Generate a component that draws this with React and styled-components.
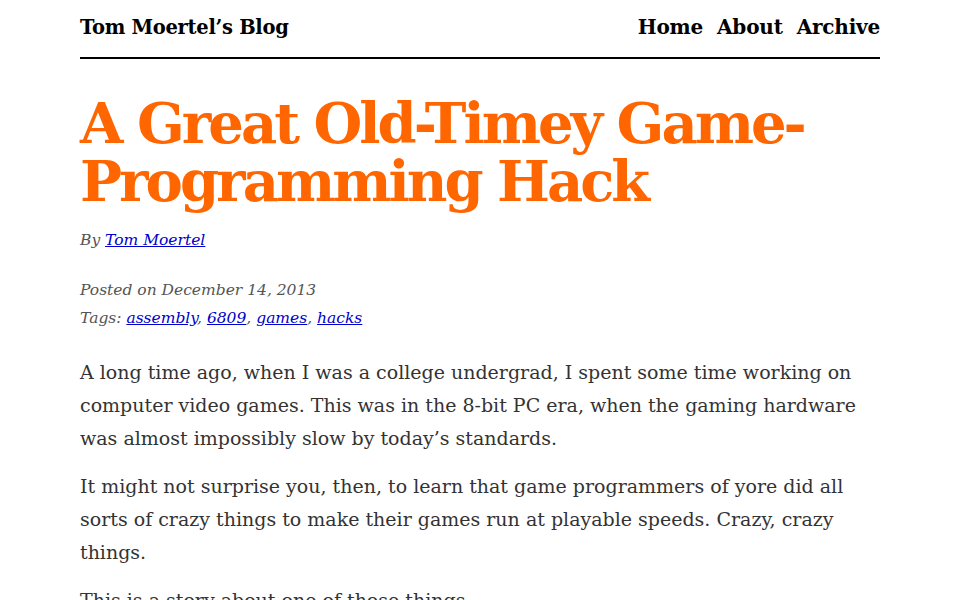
import React from "react";
import styled, { createGlobalStyle } from "styled-components";

const Global = createGlobalStyle`
  html, body { margin: 0; padding: 0; background: #fff; }
  body { font-family: "DejaVu Serif", serif; color: #333; }
`;

const Page = styled.div`
  width: 800px;
  margin: 0 auto;
`;

const Header = styled.header`
  display: flex;
  justify-content: space-between;
  align-items: baseline;
  padding-top: 15px;
  padding-bottom: 18px;
  border-bottom: 2px solid #000;
`;

const SiteName = styled.a`
  font-family: "DejaVu Serif", serif;
  font-weight: bold;
  font-size: 19.5px;
  color: #000;
  text-decoration: none;
  letter-spacing: -0.3px;
`;

const Nav = styled.nav`
  display: flex;
  gap: 14px;
`;

const NavLink = styled.a`
  font-family: "DejaVu Serif", serif;
  font-weight: bold;
  font-size: 20px;
  color: #000;
  text-decoration: none;
  letter-spacing: -0.2px;
`;

const Title = styled.h1`
  margin: 35px 0 16px;
  font-family: "DejaVu Serif", serif;
  font-weight: bold;
  font-size: 56px;
  line-height: 58px;
  color: #ff6600;
  letter-spacing: -3px;
`;

const Meta = styled.div`
  font-style: italic;
  font-size: 15.5px;
  line-height: 28px;
  color: #555;
  margin-bottom: ${(p) => p.$gap || 0}px;
`;

const MetaLink = styled.a`
  color: #00c;
  text-decoration: underline;
`;

const Body = styled.div`
  margin-top: 24px;
`;

const Para = styled.p`
  margin: 0 0 15px;
  font-size: 19px;
  line-height: 33px;
  color: #333;
`;

export default function App() {
  return (
    <Page>
      <Global />
      <Header>
        <SiteName href="#">Tom Moertel’s Blog</SiteName>
        <Nav>
          <NavLink href="#">Home</NavLink>
          <NavLink href="#">About</NavLink>
          <NavLink href="#">Archive</NavLink>
        </Nav>
      </Header>
      <Title>A Great Old-Timey Game-Programming Hack</Title>
      <Meta $gap={22}>
        By <MetaLink href="#">Tom Moertel</MetaLink>
      </Meta>
      <Meta>Posted on December 14, 2013</Meta>
      <Meta>
        Tags: <MetaLink href="#">assembly</MetaLink>, <MetaLink href="#">6809</MetaLink>,{" "}
        <MetaLink href="#">games</MetaLink>, <MetaLink href="#">hacks</MetaLink>
      </Meta>
      <Body>
        <Para>
          A long time ago, when I was a college undergrad, I spent some time working on
          computer video games. This was in the 8-bit PC era, when the gaming hardware
          was almost impossibly slow by today’s standards.
        </Para>
        <Para>
          It might not surprise you, then, to learn that game programmers of yore did all
          sorts of crazy things to make their games run at playable speeds. Crazy, crazy
          things.
        </Para>
        <Para>This is a story about one of those things.</Para>
      </Body>
    </Page>
  );
}
